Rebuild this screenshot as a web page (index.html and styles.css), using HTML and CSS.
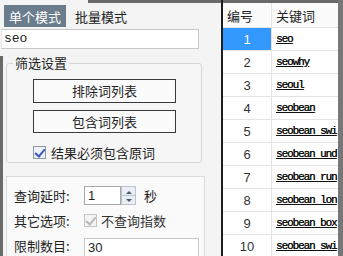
FILE: index.html
```html
<!DOCTYPE html>
<html>
<head>
<meta charset="utf-8">
<link rel="stylesheet" href="styles.css">
</head>
<body>
<div class="app">
  <div class="left">
    <div class="tabs">
      <span class="tab active">单个模式</span>
      <span class="tab">批量模式</span>
    </div>
    <div class="kw">seo</div>
    <div class="body">
      <div class="group">
        <div class="legend">筛选设置</div>
        <div class="btn">排除词列表</div>
        <div class="btn">包含词列表</div>
        <div class="chk"><span class="box on"></span><span>结果必须包含原词</span></div>
      </div>
      <div class="panel">
        <div class="row">
          <span class="lbl">查询延时:</span>
          <span class="num">1</span>
          <span class="spin"><i class="up"></i><i class="dn"></i></span>
          <span class="unit">秒</span>
        </div>
        <div class="row">
          <span class="lbl">其它选项:</span>
          <span class="box dis"></span>
          <span class="distext">不查询指数</span>
        </div>
        <div class="row">
          <span class="lbl">限制数目:</span>
          <span class="field">30</span>
        </div>
      </div>
    </div>
  </div>
  <div class="divider"></div>
  <div class="right">
    <div class="thead"><span class="c1">编号</span><span class="c2">关键词</span></div>
    <div class="tr"><span class="c1 sel">1</span><span class="c2 k">seo</span></div>
    <div class="tr"><span class="c1">2</span><span class="c2 k">seowhy</span></div>
    <div class="tr"><span class="c1">3</span><span class="c2 k">seoul</span></div>
    <div class="tr"><span class="c1">4</span><span class="c2 k">seobean</span></div>
    <div class="tr"><span class="c1">5</span><span class="c2 k">seobean swi</span></div>
    <div class="tr"><span class="c1">6</span><span class="c2 k">seobean und</span></div>
    <div class="tr"><span class="c1">7</span><span class="c2 k">seobean run</span></div>
    <div class="tr"><span class="c1">8</span><span class="c2 k">seobean lon</span></div>
    <div class="tr"><span class="c1">9</span><span class="c2 k">seobean box</span></div>
    <div class="tr"><span class="c1">10</span><span class="c2 k">seobean swi</span></div>
  </div>
  <div class="scroll"></div>
</div>
</body>
</html>
```
FILE: styles.css
```css
* { box-sizing: border-box; }
html, body { margin: 0; padding: 0; }
body {
  width: 343px; height: 256px; overflow: hidden;
  font-family: "Noto Sans CJK SC", "Noto Sans", sans-serif;
  font-size: 13px; color: #222; background: #f4f4f4;
}
.app { display: flex; width: 343px; height: 256px; }
.left {
  width: 221px; flex: none; display: flex; flex-direction: column; overflow: hidden;
  background: linear-gradient(#6a6a6a, #6a6a6a) 88px 0 / 100% 3px no-repeat, #f4f4f4;
}
.tabs { flex: none; display: flex; align-items: flex-start; height: 27px; padding: 5px 0 0 4px; gap: 9px; }
.tab { height: 22px; display: flex; align-items: center; line-height: 1; font-size: 13px; }
.tab.active { background: #6b7c8c; color: #fff; padding: 0 5px; }
.kw {
  flex: none; margin: 2px 22px 0 1px; height: 20px; background: #fff;
  border: 1px solid #c8c8c8; border-left-color: #e8e8e8;
  font-family: "Liberation Mono", monospace; font-size: 13px; line-height: 17px; padding-left: 2px;
}
.body { flex: 1; min-height: 0; margin-top: 7px; border-left: 3px solid #6a6a6a; padding: 7px 0 0 3px; }
.group {
  position: relative; width: 196px; height: 100px; border: 1px solid #d6d6d6; border-radius: 3px;
  padding: 15px 0 0 26px; display: flex; flex-direction: column; gap: 7px; background: #f6f6f6;
}
.legend { position: absolute; left: 6px; top: -10px; padding: 0 2px; background: #f4f4f4; line-height: 17px; }
.btn {
  width: 143px; height: 25px; border: 1px solid #3a3a3a; background: #fbfbfb;
  display: flex; align-items: center; justify-content: center; line-height: 1;
}
.chk { display: flex; align-items: center; gap: 5px; margin-top: 3px; }
.box {
  width: 13px; height: 13px; border: 1px solid #8e9aa6; background: #eef2f6; flex: none; position: relative;
}
.box.on::after, .box.dis::after {
  content: ""; position: absolute; left: 3px; top: 0px; width: 4px; height: 8px;
  border: solid #3b58b8; border-width: 0 2px 2px 0; transform: rotate(40deg);
}
.box.dis { border-color: #c4c4c4; background: #f4f4f4; }
.box.dis::after { border-color: #b8b8b8; }
.panel {
  margin-top: 13px; width: 199px; height: 90px; border: 1px solid #dadada; background: #fafafa;
  padding: 9px 0 0 7px; display: flex; flex-direction: column; gap: 6px;
}
.row { display: flex; align-items: center; height: 19px; }
.lbl { width: 70px; flex: none; }
.num {
  width: 37px; height: 19px; border: 1px solid #a8a8a8; background: #fff;
  font-family: "Liberation Sans", sans-serif; font-size: 13px; line-height: 17px; padding-left: 3px;
}
.spin { width: 15px; height: 19px; border: 1px solid #b8c4d0; background: #e8eef4; display: flex; flex-direction: column; }
.spin i { flex: 1; position: relative; }
.spin .up { border-bottom: 1px solid #b8c4d0; }
.spin i::after { content: ""; position: absolute; left: 4px; border: 3px solid transparent; }
.spin .up::after { top: 1px; border-bottom-color: #4a5a6a; }
.spin .dn::after { top: 3px; border-top-color: #4a5a6a; }
.unit { margin-left: 8px; }
.distext { margin-left: 4px; color: #333; }
.field {
  width: 115px; height: 20px; border: 1px solid #c8c8c8; background: #fff; margin-top: 4px;
  font-family: "Liberation Sans", sans-serif; font-size: 13px; line-height: 18px; padding-left: 3px;
}
.divider { width: 2px; flex: none; background: #1e1e1e; }
.right { flex: 1; background: #fff; border-top: 3px solid #6a6a6a; overflow: hidden; }
.thead, .tr { display: flex; height: 23px; border-bottom: 1px solid #e4e4e4; }
.thead { height: 25px; background: #fbfbfb; }
.c1 { width: 49px; flex: none; border-right: 1px solid #e4e4e4; display: flex; align-items: center; justify-content: center; }
.c2 { flex: 1; display: flex; align-items: center; padding-left: 4px; white-space: nowrap; overflow: hidden; }
.thead .c1 { justify-content: flex-start; padding-left: 4px; }
.tr .c1 { font-family: "Liberation Sans", sans-serif; font-size: 13px; color: #333; }
.c1.sel { background: #3399ff; color: #fff !important; }
.k {
  font-family: "Liberation Mono", monospace; font-size: 11px; letter-spacing: -1.1px;
  text-decoration: underline; color: #111; text-shadow: 0.3px 0 0 #111;
}
.scroll { width: 5px; flex: none; background: #777; }
```
